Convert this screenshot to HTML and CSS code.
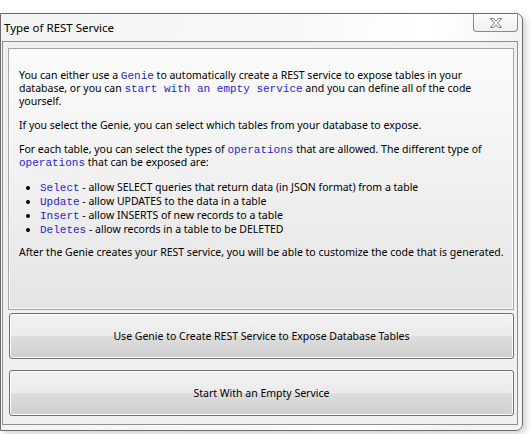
FILE: index.html
```html
<!DOCTYPE html>
<html>
<head>
<meta charset="utf-8">
<link rel="stylesheet" href="styles.css">
</head>
<body>
<div class="window">
  <div class="titlebar">
    <span class="title">Type of REST Service</span>
    <button class="close" aria-label="Close">
      <svg width="14" height="12" viewBox="0 0 14 12"><path d="M1.5 1.5 H4.5 L7 4.2 L9.5 1.5 H12.5 L8.6 6 L12.5 10.5 H9.5 L7 7.8 L4.5 10.5 H1.5 L5.4 6 Z" fill="#fdfdfd" stroke="#7a7a7a" stroke-width="1" stroke-linejoin="round"/></svg>
    </button>
  </div>
  <div class="client">
    <div class="panel">
      <p>You can either use a <code>Genie</code> to automatically create a REST service to expose tables in your database, or you can <code>start with an empty service</code> and you can define all of the code yourself.</p>
      <p>If you select the Genie, you can select which tables from your database to expose.</p>
      <p>For each table, you can select the types of <code>operations</code> that are allowed. The different type of <code>operations</code> that can be exposed are:</p>
      <ul>
        <li><code>Select</code> - allow SELECT queries that return data (in JSON format) from a table</li>
        <li><code>Update</code> - allow UPDATES to the data in a table</li>
        <li><code>Insert</code> - allow INSERTS of new records to a table</li>
        <li><code>Deletes</code> - allow records in a table to be DELETED</li>
      </ul>
      <p>After the Genie creates your REST service, you will be able to customize the code that is generated.</p>
    </div>
    <button class="btn">Use Genie to Create REST Service to Expose Database Tables</button>
    <button class="btn">Start With an Empty Service</button>
  </div>
</div>
</body>
</html>
```
FILE: styles.css
```css
html, body {
  margin: 0;
  padding: 0;
  background: #ffffff;
  width: 531px;
  height: 434px;
  overflow: hidden;
  font-family: "Noto Sans", "Liberation Sans", sans-serif;
}

.window {
  margin-top: 13px;
  width: 521px;
  height: 416px;
  border: 1px solid #6c6c6c;
  border-radius: 0 7px 7px 0;
  background: linear-gradient(100deg, #f3f3f3 0%, #f8f8f8 50%, #ffffff 72%, #f3f3f3 90%, #f4f4f4 100%);
  box-shadow: 3px 3px 6px rgba(0,0,0,0.18);
  display: flex;
  flex-direction: column;
}

.titlebar {
  height: 27px;
  display: flex;
  justify-content: space-between;
  align-items: flex-start;
  padding-left: 3px;
  padding-right: 4px;
}

.title {
  font-size: 11.5px;
  color: #000;
  margin-top: 6px;
}

.close {
  width: 45px;
  height: 18px;
  margin: 0;
  padding: 0;
  border: 1px solid #8a8a8a;
  border-top: none;
  border-radius: 0 0 4px 4px;
  background: linear-gradient(#fbfbfb, #f1f1f1);
  display: flex;
  align-items: center;
  justify-content: center;
}

.client {
  flex: 1;
  margin: 0 4px 5px 1px;
  border: 1px solid #8f8f8f;
  background: #f0f0f0;
  padding: 6px 3px 7px 5px;
  display: flex;
  flex-direction: column;
}

.panel {
  height: 240px;
  flex: none;
  border: 1px solid #a6a6a6;
  box-shadow: inset 0 0 0 1px #fafafa;
  background: linear-gradient(#fbfbfb 0%, #f3f3f3 40%, #e4e4e4 100%);
  padding: 20px 5px 0 10px;
  font-size: 10.5px;
  line-height: 13px;
  color: #000;
}

.panel p {
  margin: 0 0 11px 0;
}

.panel ul {
  margin: 0 0 10px 0;
  padding-left: 21px;
  list-style: disc;
}

.panel li {
  line-height: 14px;
}

code {
  font-family: "Liberation Mono", "Courier New", monospace;
  font-size: 11px;
  line-height: 1;
  color: #2626d8;
}

.btn {
  flex: none;
  font-family: "Noto Sans", "Liberation Sans", sans-serif;
  font-size: 10.5px;
  color: #000;
  height: 46px;
  border: 1px solid #707070;
  border-radius: 3px;
  box-shadow: inset 0 0 0 1px #fbfbfb;
  background: linear-gradient(#f2f2f2 0%, #ebebeb 50%, #dddddd 51%, #cfcfcf 100%);
  margin: 0 0 0 1px;
}

.btn:first-of-type {
  margin-top: 3px;
}

.btn + .btn {
  margin-top: 11px;
}
```
